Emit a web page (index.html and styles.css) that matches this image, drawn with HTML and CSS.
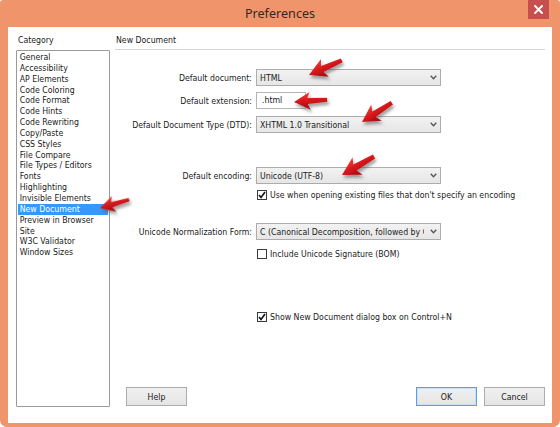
FILE: index.html
```html
<!DOCTYPE html>
<html>
<head>
<meta charset="utf-8">
<link rel="stylesheet" href="styles.css">
</head>
<body>
<div class="window">
  <div class="titlebar">
    <span></span>
    <span class="title">Preferences</span>
    <div class="close">
      <svg width="9" height="9" viewBox="0 0 9 9"><path d="M1 1 L8 8 M8 1 L1 8" stroke="#fff" stroke-width="1.9" stroke-linecap="square"/></svg>
    </div>
  </div>
  <div class="client">
    <div class="left">
      <div class="cap">Category</div>
      <ul class="list">
        <li>General</li>
        <li>Accessibility</li>
        <li>AP Elements</li>
        <li>Code Coloring</li>
        <li>Code Format</li>
        <li>Code Hints</li>
        <li>Code Rewriting</li>
        <li>Copy/Paste</li>
        <li>CSS Styles</li>
        <li>File Compare</li>
        <li>File Types / Editors</li>
        <li>Fonts</li>
        <li>Highlighting</li>
        <li>Invisible Elements</li>
        <li class="sel">New Document</li>
        <li>Preview in Browser</li>
        <li>Site</li>
        <li>W3C Validator</li>
        <li>Window Sizes</li>
      </ul>
    </div>
    <div class="right">
      <div class="head">New Document</div>
      <div class="row r1">
        <span class="lbl">Default document:</span>
        <div class="select"><span class="val">HTML</span><svg class="chev" width="7" height="5" viewBox="0 0 7 5"><polyline points="0.7,0.8 3.5,3.8 6.3,0.8" fill="none" stroke="#555" stroke-width="1.3"/></svg></div>
      </div>
      <div class="row r2">
        <span class="lbl">Default extension:</span>
        <div class="input">.html</div>
      </div>
      <div class="row r3">
        <span class="lbl">Default Document Type (DTD):</span>
        <div class="select"><span class="val">XHTML 1.0 Transitional</span><svg class="chev" width="7" height="5" viewBox="0 0 7 5"><polyline points="0.7,0.8 3.5,3.8 6.3,0.8" fill="none" stroke="#555" stroke-width="1.3"/></svg></div>
      </div>
      <div class="row r4">
        <span class="lbl">Default encoding:</span>
        <div class="select"><span class="val">Unicode (UTF-8)</span><svg class="chev" width="7" height="5" viewBox="0 0 7 5"><polyline points="0.7,0.8 3.5,3.8 6.3,0.8" fill="none" stroke="#555" stroke-width="1.3"/></svg></div>
      </div>
      <div class="row chk r5">
        <span class="box"><svg width="8" height="8" viewBox="0 0 8 8"><polyline points="1,4 3,6.5 7,1" fill="none" stroke="#111" stroke-width="1.6"/></svg></span>
        <span class="ctext">Use when opening existing files that don't specify an encoding</span>
      </div>
      <div class="row r6">
        <span class="lbl">Unicode Normalization Form:</span>
        <div class="select"><span class="val">C (Canonical Decomposition, followed by Canonical Composition)</span><svg class="chev" width="7" height="5" viewBox="0 0 7 5"><polyline points="0.7,0.8 3.5,3.8 6.3,0.8" fill="none" stroke="#555" stroke-width="1.3"/></svg></div>
      </div>
      <div class="row chk r7">
        <span class="box"></span>
        <span class="ctext">Include Unicode Signature (BOM)</span>
      </div>
      <div class="row chk r8">
        <span class="box"><svg width="8" height="8" viewBox="0 0 8 8"><polyline points="1,4 3,6.5 7,1" fill="none" stroke="#111" stroke-width="1.6"/></svg></span>
        <span class="ctext">Show New Document dialog box on Control+N</span>
      </div>
      <div class="footer">
        <div class="btn help">Help</div>
        <span class="spacer"></span>
        <div class="btn ok">OK</div>
        <div class="btn">Cancel</div>
      </div>
    </div>
  </div>
  <svg class="arrows" width="560" height="427" viewBox="0 0 560 427">
    <defs>
      <linearGradient id="red" x1="0" y1="0" x2="0" y2="1">
        <stop offset="0" stop-color="#f04038"/>
        <stop offset="0.5" stop-color="#d4141a"/>
        <stop offset="1" stop-color="#9c0a0e"/>
      </linearGradient>
      <filter id="sh" x="-40%" y="-40%" width="180%" height="180%">
        <feDropShadow dx="1.5" dy="3" stdDeviation="1.8" flood-color="#555" flood-opacity="0.55"/>
      </filter>
      <polygon id="arr" points="0,0 18,-10 15,-3.4 37,-2.2 37,2.2 15,3.4 18,10"/>
    </defs>
    <g fill="url(#red)" filter="url(#sh)">
      <use href="#arr" transform="translate(309 75) rotate(-24) scale(0.97)"/>
      <use href="#arr" transform="translate(294 102) rotate(-4) scale(0.9)"/>
      <use href="#arr" transform="translate(362 122) rotate(-33) scale(0.96)"/>
      <use href="#arr" transform="translate(342 175) rotate(-30) scale(1)"/>
      <use href="#arr" transform="translate(100 208) rotate(-16) scale(0.82)"/>
    </g>
  </svg>
</div>
</body>
</html>
```
FILE: styles.css
```css
html, body {
  margin: 0;
  padding: 0;
  background: #ffffff;
}

.window {
  position: relative;
  width: 560px;
  height: 427px;
  background: #f0946c;
  border-radius: 3px 3px 7px 7px;
  box-sizing: border-box;
  display: flex;
  flex-direction: column;
  overflow: hidden;
  font-family: "DejaVu Sans Condensed", "DejaVu Sans", sans-serif;
  font-stretch: semi-condensed;
  font-size: 8.7px;
  color: #1a1a1a;
}

.titlebar {
  height: 27px;
  display: grid;
  grid-template-columns: 1fr auto 1fr;
  align-items: start;
  flex: none;
}

.title {
  font-family: "Noto Sans", "Open Sans", sans-serif;
  font-stretch: normal;
  font-size: 12.6px;
  line-height: 27px;
  color: #3a261c;
}

.close {
  justify-self: end;
  margin-right: 11px;
  width: 21px;
  height: 19px;
  background: #c7504f;
  display: flex;
  align-items: center;
  justify-content: center;
}

.client {
  height: 396px;
  margin: 0 8px;
  background: #ffffff;
  box-sizing: border-box;
  padding: 8px 7px 16px 8px;
  display: grid;
  grid-template-columns: 94px 1fr;
  column-gap: 5px;
}

.left {
  display: flex;
  flex-direction: column;
}

.cap {
  height: 11px;
  line-height: 11px;
  padding-left: 2px;
  margin-bottom: 4px;
}

.list {
  flex: 1;
  margin: 0;
  padding: 1px 1px 0 1px;
  list-style: none;
  border: 1px solid #9a9a9a;
  border-radius: 1px;
}

.list li {
  height: 10.85px;
  line-height: 10.85px;
  padding-left: 1.7px;
  white-space: nowrap;
}

.list li.sel {
  background: #3399ff;
  color: #ffffff;
}

.right {
  display: flex;
  flex-direction: column;
}

.head {
  height: 11px;
  line-height: 11px;
  padding-left: 1px;
  padding-bottom: 3px;
  border-bottom: 1px solid #d5d5d5;
}

.row {
  display: grid;
  grid-template-columns: 137px auto;
  column-gap: 4px;
  align-items: center;
  justify-items: start;
}

.lbl {
  justify-self: end;
  white-space: nowrap;
}

.select {
  width: 185px;
  height: 17px;
  box-sizing: border-box;
  border: 1px solid #acacac;
  background: linear-gradient(#f2f2f2, #e6e6e6);
  display: flex;
  align-items: center;
  padding-left: 3px;
  padding-right: 3px;
}

.select .val {
  flex: 1;
  overflow: hidden;
  white-space: nowrap;
  margin-right: 6px;
}

.chev {
  flex: none;
}

.input {
  width: 50px;
  height: 17px;
  box-sizing: border-box;
  border: 1px solid #b5b5b5;
  background: #fff;
  line-height: 15px;
  padding-left: 5px;
}

.chk {
  height: 12px;
}

.chk .box {
  grid-column: 2;
  grid-row: 1;
  width: 10px;
  height: 10px;
  box-sizing: border-box;
  border: 1px solid #3a3a3a;
  background: #fff;
  display: flex;
  align-items: center;
  justify-content: center;
  margin-left: 1px;
}

.chk .ctext {
  grid-column: 2;
  grid-row: 1;
  margin-left: 14px;
  white-space: nowrap;
}

.r1 { margin-top: 19px; }
.r2 { margin-top: 6px; }
.r3 { margin-top: 7px; }
.r4 { margin-top: 34px; }
.r5 { margin-top: 5px; }
.r6 { margin-top: 22px; }
.r7 { margin-top: 8px; }
.r8 { margin-top: 51px; }

.footer {
  margin-top: auto;
  margin-bottom: 1px;
  display: flex;
  gap: 7px;
}

.spacer {
  flex: 1;
}

.btn {
  width: 61px;
  height: 19px;
  box-sizing: border-box;
  border: 1px solid #acacac;
  background: linear-gradient(#f0f0f0, #e5e5e5);
  display: flex;
  align-items: center;
  justify-content: center;
}

.btn.help {
  margin-left: 11px;
}

.btn.ok {
  border-color: #5aa0e0;
  box-shadow: inset 0 0 0 1px #c9e0f7;
}

.arrows {
  position: absolute;
  left: 0;
  top: 0;
  pointer-events: none;
}
```
